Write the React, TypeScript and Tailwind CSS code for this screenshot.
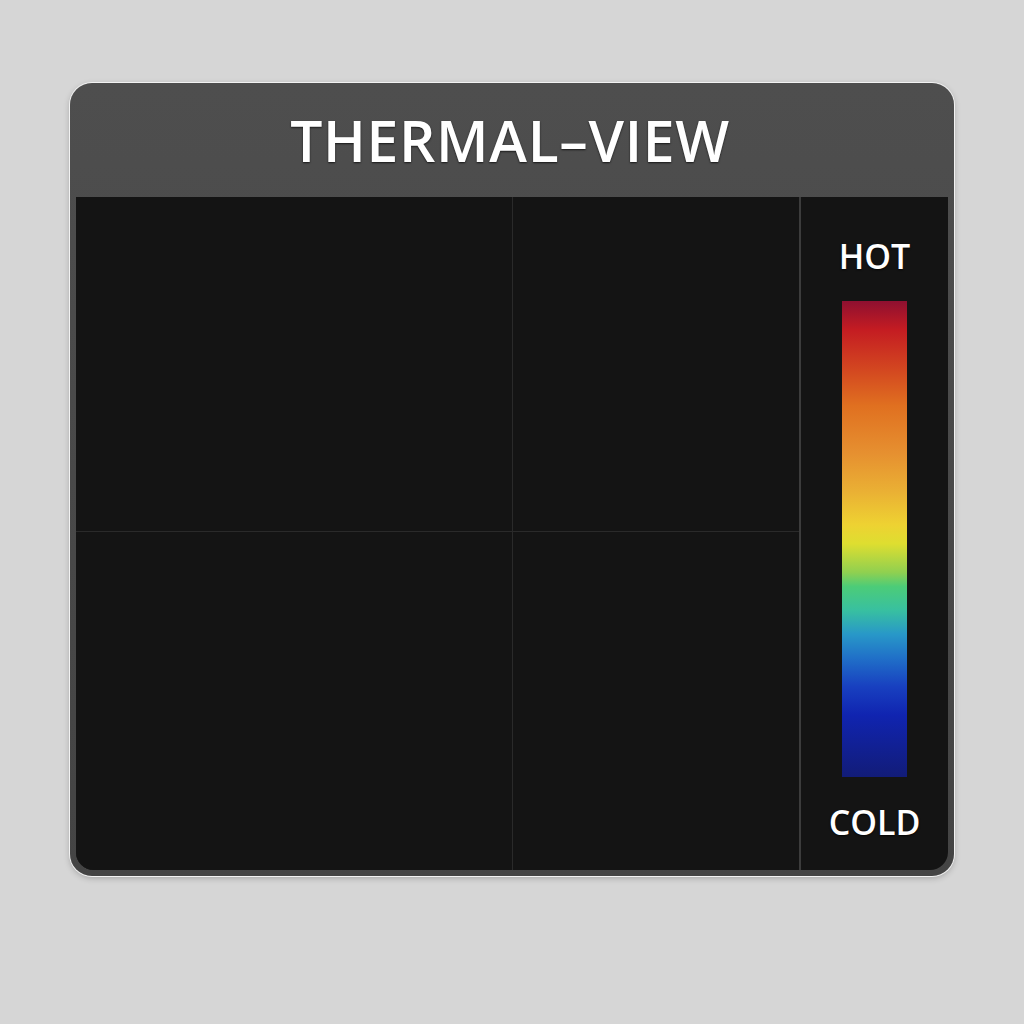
import React from 'react';

const App = () => {
  return (
    <div className="min-h-screen w-full bg-[#d6d6d6] pt-[83px]" style={{ fontFamily: '"Open Sans", "Noto Sans", sans-serif' }}>
      <div className="mx-auto flex h-[793px] w-[884px] flex-col rounded-[22px] bg-gradient-to-b from-[#4e4e4e] to-[#444444] px-[6px] pb-[6px] shadow-[0_0_0_1px_#f2f2f2,0_2px_6px_rgba(0,0,0,0.25)]">
        {/* Header */}
        <div className="flex h-[114px] shrink-0 items-center justify-center">
          <h1 className="translate-x-[-2px] text-[57px] font-semibold leading-none tracking-[0.012em] text-white [text-shadow:0_1px_2px_rgba(0,0,0,0.7)]">
            THERMAL–VIEW
          </h1>
        </div>

        {/* Body */}
        <div className="flex flex-1 overflow-hidden rounded-b-[18px] bg-[#141414]">
          <div className="grid w-[723px] grid-cols-[436px_1fr] grid-rows-[334px_1fr] gap-px bg-[#2a2a2a]">
            <div className="bg-[#141414]" />
            <div className="bg-[#141414]" />
            <div className="bg-[#141414]" />
            <div className="bg-[#141414]" />
          </div>
          <div className="w-[2px] bg-[#3c3c3c]" />
          <div className="flex flex-1 flex-col items-center pt-[42px]">
            <span className="text-[34px] font-semibold leading-none text-white [text-shadow:0_1px_2px_rgba(0,0,0,0.8)]">HOT</span>
            <div className="mt-[28px] h-[476px] w-[65px] bg-[linear-gradient(to_bottom,#8e1030_0%,#c41c22_6%,#d44a20_15%,#e07020_22%,#e69030_32%,#eab034_40%,#eed232_47%,#dede30_51%,#90d050_57%,#4ccc78_60%,#38c0a0_65%,#2898c8_70%,#2070c8_75%,#1840c0_81%,#1024b0_87%,#121c78_100%)]" />
            <span className="mt-[28px] text-[34px] font-semibold leading-none text-white [text-shadow:0_1px_2px_rgba(0,0,0,0.8)]">COLD</span>
          </div>
        </div>
      </div>
    </div>
  );
};

export default App;
